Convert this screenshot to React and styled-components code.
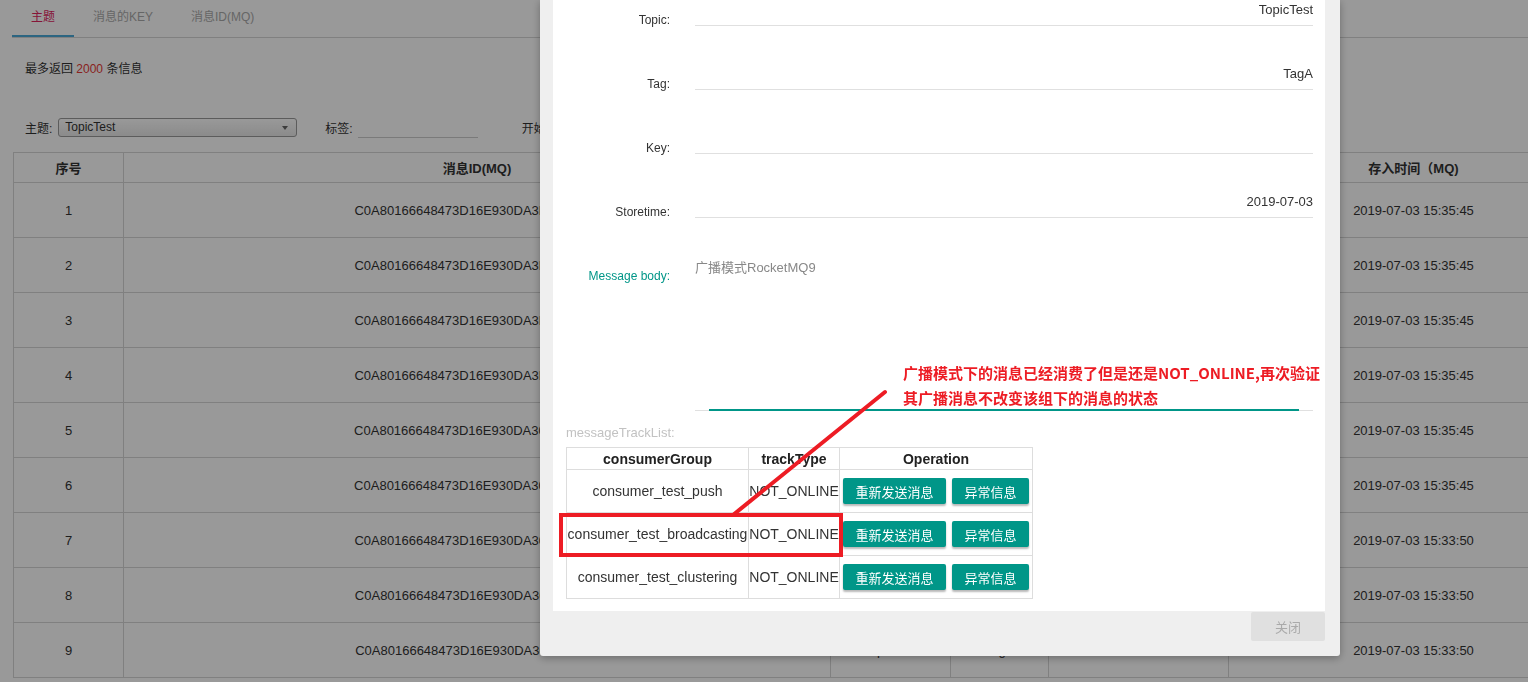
import React from 'react';
import styled, { createGlobalStyle } from 'styled-components';

const GlobalStyle = createGlobalStyle`
  html, body { margin: 0; padding: 0; background: #fff; overflow: hidden; }
  body { font-family: "Liberation Sans", Arial, "Noto Sans CJK SC", sans-serif; color: #333; }
  * { box-sizing: border-box; }
`;

const Page = styled.div`
  width: 1600px;
  padding-left: 12px;
`;

const TabBar = styled.div`
  display: flex;
  height: 38px;
  border-bottom: 1px solid #d6d6d6;
`;

const Tab = styled.div`
  padding: 0 19px;
  height: 37px;
  line-height: 35px;
  font-size: 12px;
  color: ${p => (p.$active ? '#e0245e' : '#aaa')};
  border-bottom: 2px solid ${p => (p.$active ? '#4aa8d8' : 'transparent')};
`;

const Info = styled.div`
  margin-top: 23px;
  padding-left: 13px;
  font-size: 12px;
  line-height: 16px;
  color: #333;
`;

const Red = styled.span`
  color: #e53935;
`;

const FilterRow = styled.div`
  margin-top: 39px;
  padding-left: 13px;
  height: 22px;
  display: flex;
  align-items: center;
  font-size: 12px;
`;

const FilterLabel = styled.span`
  color: #333;
  margin-left: ${p => p.$gap || 0}px;
`;

const Select = styled.div`
  position: relative;
  margin-left: 6px;
  width: 239px;
  height: 19px;
  border: 1px solid #999;
  border-radius: 3px;
  background: linear-gradient(#fff, #e8e8e8);
  font-size: 12px;
  line-height: 17px;
  padding-left: 6px;
  color: #333;
`;

const Caret = styled.span`
  position: absolute;
  right: 8px;
  top: 7px;
  width: 0;
  height: 0;
  border-left: 3px solid transparent;
  border-right: 3px solid transparent;
  border-top: 4px solid #666;
`;

const LineInput = styled.div`
  margin-left: 5px;
  width: 120px;
  height: 22px;
  border-bottom: 1px solid #ccc;
`;

const DataTable = styled.table`
  margin-top: 14px;
  margin-left: 1px;
  border-collapse: collapse;
  table-layout: fixed;
  width: 1585px;
  font-size: 13px;
  color: #333;
  th, td {
    border: 1px solid #d5d5d5;
    text-align: center;
    padding: 0;
  }
  th { height: 30px; font-weight: bold; }
  td { height: 55px; }
`;

const Dim = styled.div`
  position: fixed;
  inset: 0;
  background: rgba(0, 0, 0, 0.4);
`;

const Modal = styled.div`
  position: fixed;
  left: 540px;
  top: 0;
  width: 800px;
  height: 656px;
  background: #efefef;
  border-radius: 0 0 3px 3px;
  box-shadow: 0 2px 8px rgba(0, 0, 0, 0.3);
  display: flex;
  flex-direction: column;
  padding: 0 15px 15px 13px;
`;

const Panel = styled.div`
  flex: 1;
  background: #fff;
  padding: 0 12px 0 13px;
`;

const FieldRow = styled.div`
  display: grid;
  grid-template-columns: 117px 1fr;
  column-gap: 25px;
  height: ${p => p.$h || 64}px;
  margin-left: -13px;
`;

const FieldLabel = styled.div`
  text-align: right;
  font-size: 12px;
  line-height: 16px;
  padding-top: 12px;
  color: ${p => (p.$accent ? '#009688' : '#333')};
`;

const FieldValue = styled.div`
  margin-top: 2px;
  height: 24px;
  border-bottom: 1px solid #e0e0e0;
  text-align: right;
  font-size: 13px;
  line-height: 16px;
  color: #333;
`;

const BodyArea = styled.div`
  position: relative;
  margin-top: 2px;
  padding-top: 2px;
  height: 153px;
  border-bottom: 1px solid #e0e0e0;
  font-size: 13px;
  line-height: 16px;
  color: #888;
  &::after {
    content: '';
    position: absolute;
    left: 14px;
    right: 14px;
    bottom: -1px;
    height: 2px;
    background: #009688;
  }
`;

const TrackLabel = styled.div`
  margin-top: 9px;
  font-size: 13px;
  line-height: 16px;
  color: #c2c2c2;
`;

const TrackTable = styled.table`
  margin-top: 6px;
  border-collapse: collapse;
  table-layout: fixed;
  width: 466px;
  font-size: 14px;
  color: #333;
  th, td {
    border: 1px solid #ddd;
    text-align: center;
    padding: 0;
    white-space: nowrap;
  }
  th { height: 22px; font-weight: bold; color: #222; }
  td { height: 43px; }
`;

const Ops = styled.div`
  display: flex;
  justify-content: center;
  gap: 6px;
`;

const OpButton = styled.button`
  height: 26px;
  padding: 0 12.5px;
  border: none;
  border-radius: 2px;
  background: #009688;
  color: #fff;
  font-family: inherit;
  font-size: 13px;
  box-shadow: 0 2px 2px rgba(0, 0, 0, 0.28);
`;

const Footer = styled.div`
  display: flex;
  justify-content: flex-end;
  padding-top: 1px;
`;

const CloseButton = styled.button`
  width: 74px;
  height: 29px;
  border: none;
  border-radius: 2px;
  background: #e0e0e0;
  color: #aaa;
  font-family: inherit;
  font-size: 13px;
`;

const Annot = styled.div`
  position: fixed;
  inset: 0;
  pointer-events: none;
`;

const RedBox = styled.div`
  position: absolute;
  left: 559px;
  top: 513px;
  width: 284px;
  height: 44px;
  border: 4px solid #ed1c24;
`;

const Note = styled.div`
  position: absolute;
  left: 903px;
  top: 360px;
  font-family: "Noto Sans CJK SC", sans-serif;
  font-weight: bold;
  font-size: 15px;
  line-height: 25px;
  color: #ed1c24;
  white-space: nowrap;
`;

const rows = [
  ['1', 'C0A80166648473D16E930DA3F5D50000', '15:35:45'],
  ['2', 'C0A80166648473D16E930DA3F5D60001', '15:35:45'],
  ['3', 'C0A80166648473D16E930DA3F5D70002', '15:35:45'],
  ['4', 'C0A80166648473D16E930DA3F5D80003', '15:35:45'],
  ['5', 'C0A80166648473D16E930DA30A3C0004', '15:35:45'],
  ['6', 'C0A80166648473D16E930DA30A3D0005', '15:35:45'],
  ['7', 'C0A80166648473D16E930DA30A3E0006', '15:33:50'],
  ['8', 'C0A80166648473D16E930DA30A3F0007', '15:33:50'],
  ['9', 'C0A80166648473D16E930DA30A400008', '15:33:50'],
];

const tracks = ['consumer_test_push', 'consumer_test_broadcasting', 'consumer_test_clustering'];

export default function App() {
  return (
    <>
      <GlobalStyle />
      <Page>
        <TabBar>
          <Tab $active>主题</Tab>
          <Tab>消息的KEY</Tab>
          <Tab>消息ID(MQ)</Tab>
        </TabBar>
        <Info>
          最多返回 <Red>2000</Red> 条信息
        </Info>
        <FilterRow>
          <FilterLabel>主题:</FilterLabel>
          <Select>
            TopicTest
            <Caret />
          </Select>
          <FilterLabel $gap={28}>标签:</FilterLabel>
          <LineInput />
          <FilterLabel $gap={44}>开始时间:</FilterLabel>
        </FilterRow>
        <DataTable>
          <colgroup>
            <col style={{ width: 110 }} />
            <col style={{ width: 707 }} />
            <col style={{ width: 120 }} />
            <col style={{ width: 98 }} />
            <col style={{ width: 180 }} />
            <col style={{ width: 370 }} />
          </colgroup>
          <thead>
            <tr>
              <th>序号</th>
              <th>消息ID(MQ)</th>
              <th>Topic</th>
              <th>Tag</th>
              <th>Key</th>
              <th>存入时间（MQ)</th>
            </tr>
          </thead>
          <tbody>
            {rows.map(r => (
              <tr key={r[0]}>
                <td>{r[0]}</td>
                <td>{r[1]}</td>
                <td>TopicTest</td>
                <td>TagA</td>
                <td></td>
                <td>2019-07-03 {r[2]}</td>
              </tr>
            ))}
          </tbody>
        </DataTable>
      </Page>

      <Dim />

      <Modal>
        <Panel>
          <FieldRow>
            <FieldLabel>Topic:</FieldLabel>
            <FieldValue>TopicTest</FieldValue>
          </FieldRow>
          <FieldRow>
            <FieldLabel>Tag:</FieldLabel>
            <FieldValue>TagA</FieldValue>
          </FieldRow>
          <FieldRow>
            <FieldLabel>Key:</FieldLabel>
            <FieldValue></FieldValue>
          </FieldRow>
          <FieldRow>
            <FieldLabel>Storetime:</FieldLabel>
            <FieldValue>2019-07-03</FieldValue>
          </FieldRow>
          <FieldRow $h={160}>
            <FieldLabel $accent>Message body:</FieldLabel>
            <BodyArea>广播模式RocketMQ9</BodyArea>
          </FieldRow>
          <TrackLabel>messageTrackList:</TrackLabel>
          <TrackTable>
            <colgroup>
              <col style={{ width: 182 }} />
              <col style={{ width: 91 }} />
              <col style={{ width: 193 }} />
            </colgroup>
            <thead>
              <tr>
                <th>consumerGroup</th>
                <th>trackType</th>
                <th>Operation</th>
              </tr>
            </thead>
            <tbody>
              {tracks.map(t => (
                <tr key={t}>
                  <td>{t}</td>
                  <td>NOT_ONLINE</td>
                  <td>
                    <Ops>
                      <OpButton>重新发送消息</OpButton>
                      <OpButton>异常信息</OpButton>
                    </Ops>
                  </td>
                </tr>
              ))}
            </tbody>
          </TrackTable>
        </Panel>
        <Footer>
          <CloseButton>关闭</CloseButton>
        </Footer>
      </Modal>

      <Annot>
        <svg width="1528" height="682" style={{ position: 'absolute', left: 0, top: 0 }}>
          <line x1="885" y1="392" x2="733" y2="515" stroke="#ed1c24" strokeWidth="4" strokeLinecap="round" />
        </svg>
        <RedBox />
        <Note>
          广播模式下的消息已经消费了但是还是NOT_ONLINE,再次验证
          <br />
          其广播消息不改变该组下的消息的状态
        </Note>
      </Annot>
    </>
  );
}
